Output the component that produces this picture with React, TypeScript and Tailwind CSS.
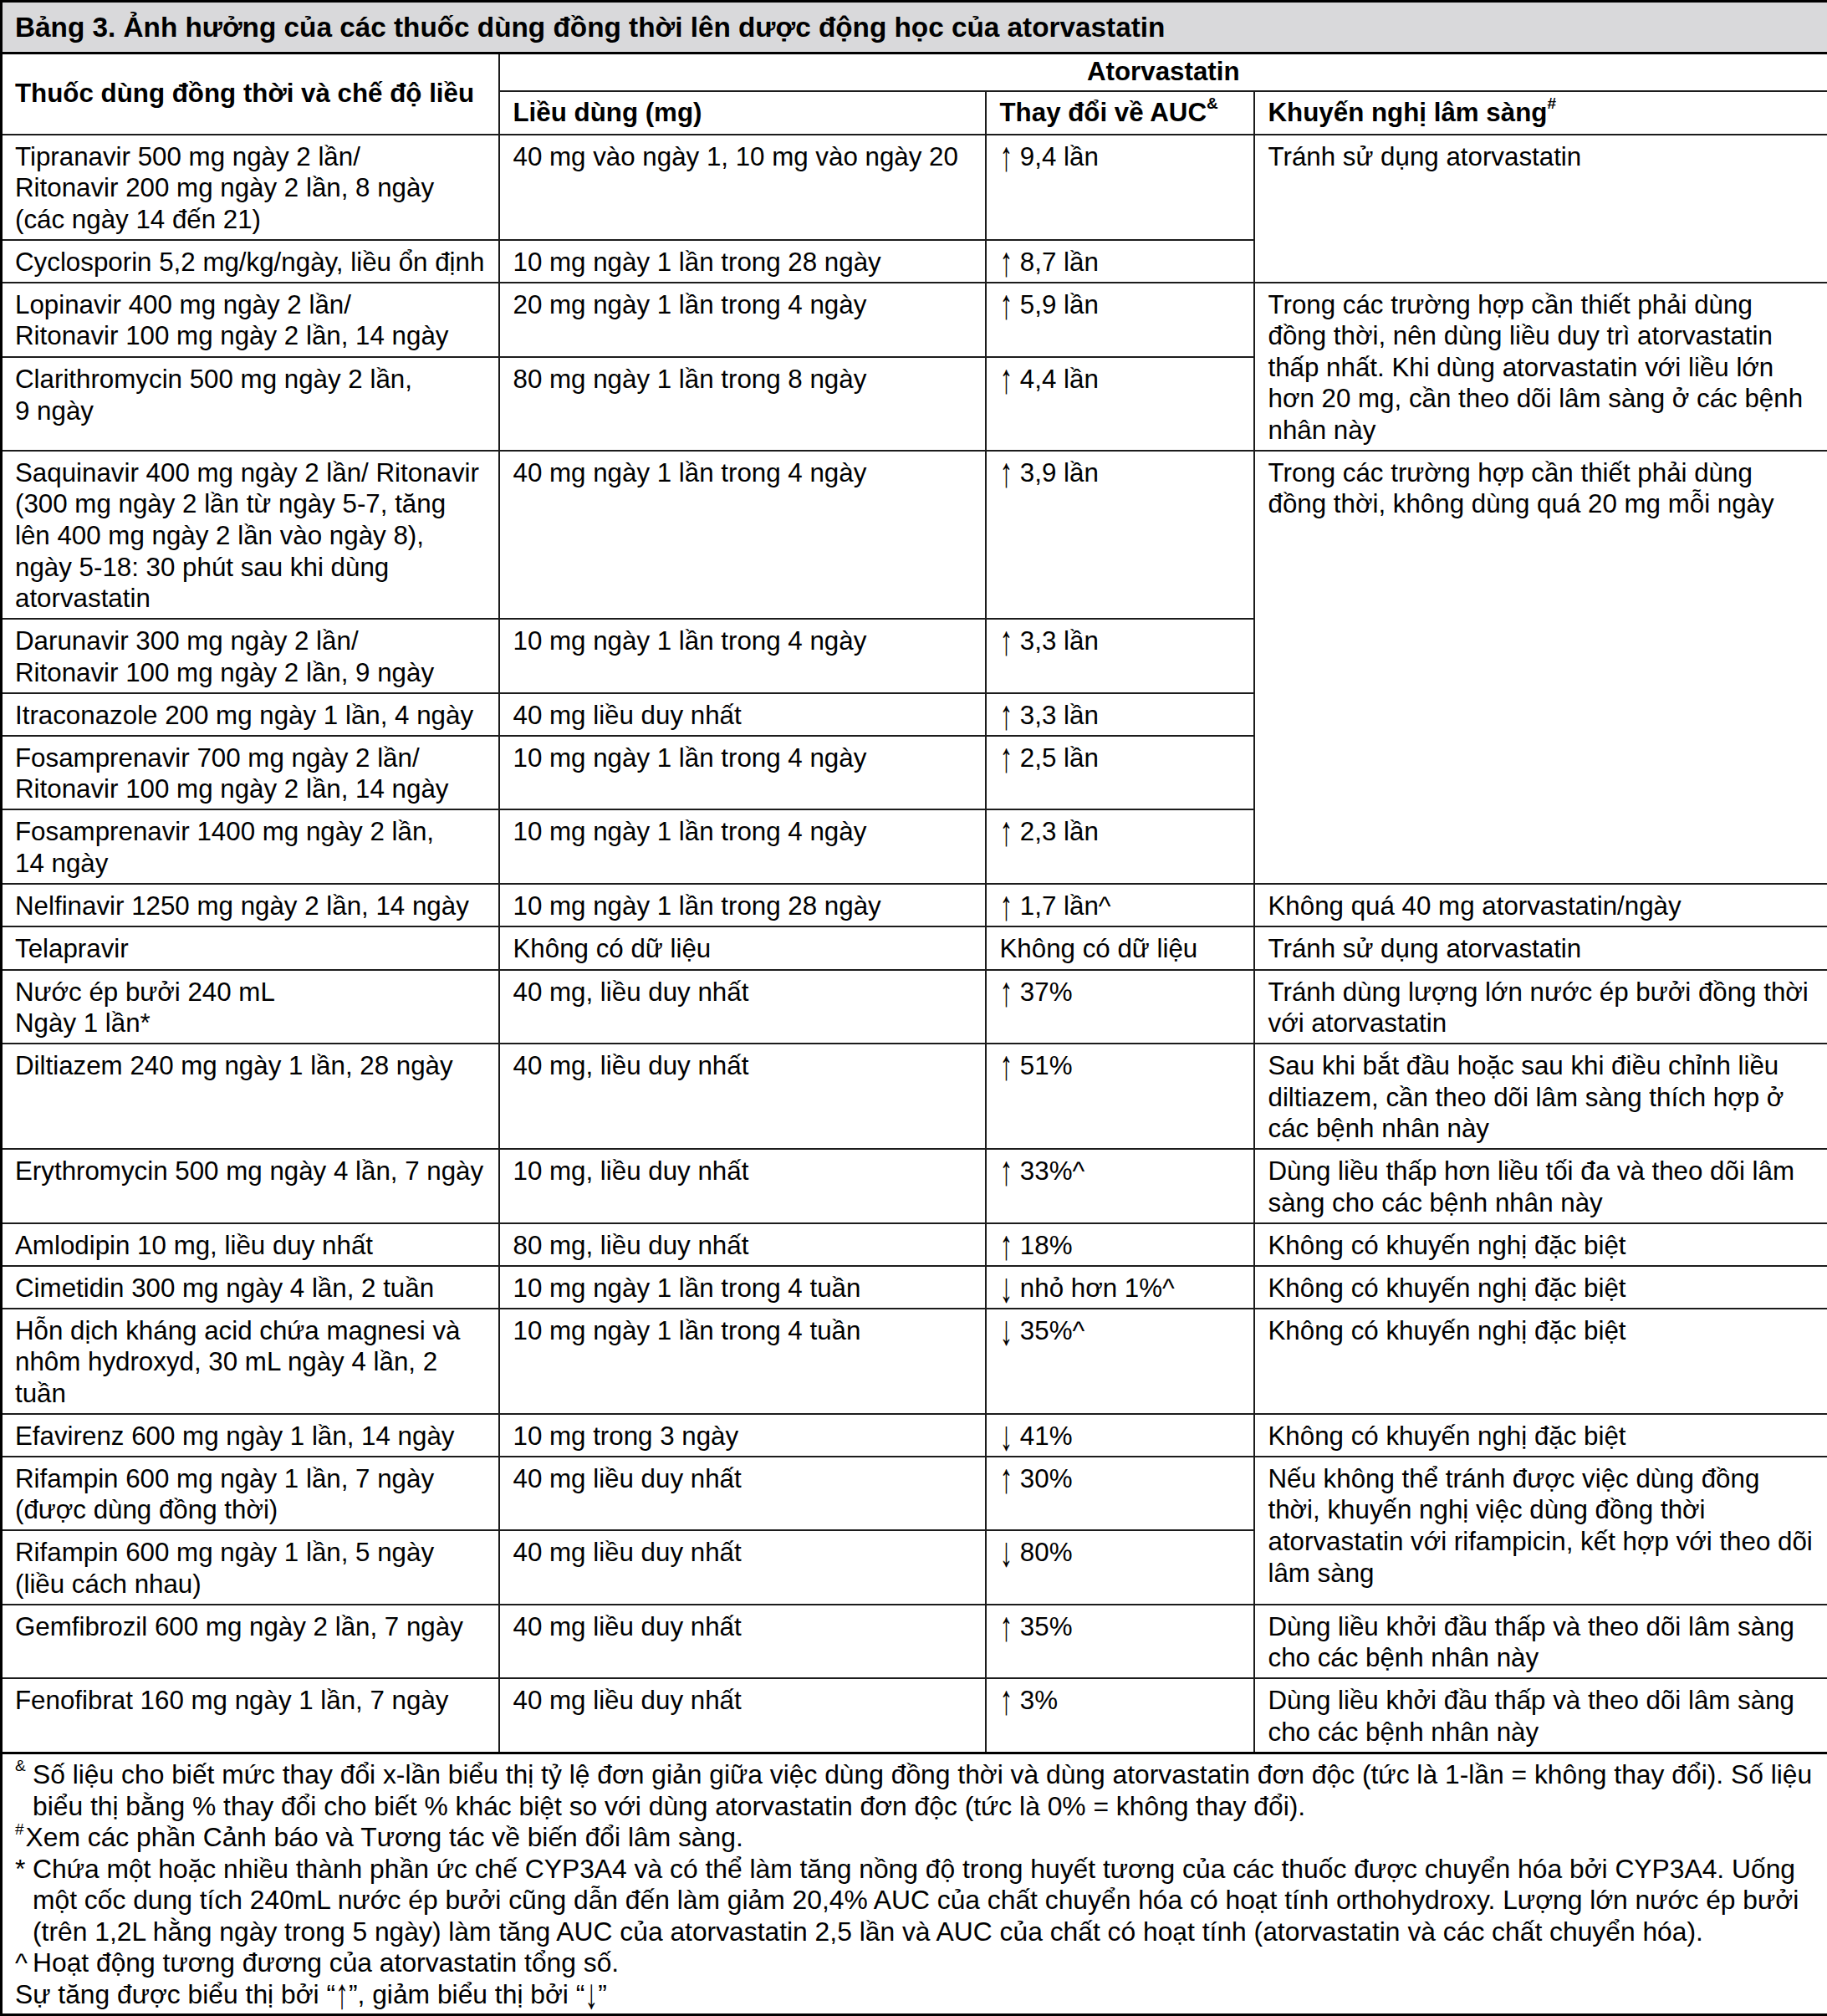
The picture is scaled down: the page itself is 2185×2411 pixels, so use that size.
import React from "react";

type Row = {
  a: string;
  b: string;
  c: string;
  d?: string;
  dSpan?: number;
  h?: string;
};

const rows: Row[] = [
  { a: "Tipranavir 500 mg ngày 2 lần/\nRitonavir 200 mg ngày 2 lần, 8 ngày\n(các ngày 14 đến 21)", b: "40 mg vào ngày 1, 10 mg vào ngày 20", c: "↑ 9,4 lần", d: "Tránh sử dụng atorvastatin", dSpan: 2 },
  { a: "Cyclosporin 5,2 mg/kg/ngày, liều ổn định", b: "10 mg ngày 1 lần trong 28 ngày", c: "↑ 8,7 lần" },
  { a: "Lopinavir 400 mg ngày 2 lần/\nRitonavir 100 mg ngày 2 lần, 14 ngày", b: "20 mg ngày 1 lần trong 4 ngày", c: "↑ 5,9 lần", d: "Trong các trường hợp cần thiết phải dùng\nđồng thời, nên dùng liều duy trì atorvastatin\nthấp nhất. Khi dùng atorvastatin với liều lớn\nhơn 20 mg, cần theo dõi lâm sàng ở các bệnh\nnhân này", dSpan: 2, h: "h-[89px]" },
  { a: "Clarithromycin 500 mg ngày 2 lần,\n9 ngày", b: "80 mg ngày 1 lần trong 8 ngày", c: "↑ 4,4 lần", h: "h-[111px]" },
  { a: "Saquinavir 400 mg ngày 2 lần/ Ritonavir\n(300 mg ngày 2 lần từ ngày 5-7, tăng\nlên 400 mg ngày 2 lần vào ngày 8),\nngày 5-18: 30 phút sau khi dùng\natorvastatin", b: "40 mg ngày 1 lần trong 4 ngày", c: "↑ 3,9 lần", d: "Trong các trường hợp cần thiết phải dùng\nđồng thời, không dùng quá 20 mg mỗi ngày", dSpan: 5 },
  { a: "Darunavir 300 mg ngày 2 lần/\nRitonavir 100 mg ngày 2 lần, 9 ngày", b: "10 mg ngày 1 lần trong 4 ngày", c: "↑ 3,3 lần" },
  { a: "Itraconazole 200 mg ngày 1 lần, 4 ngày", b: "40 mg liều duy nhất", c: "↑ 3,3 lần" },
  { a: "Fosamprenavir 700 mg ngày 2 lần/\nRitonavir 100 mg ngày 2 lần, 14 ngày", b: "10 mg ngày 1 lần trong 4 ngày", c: "↑ 2,5 lần" },
  { a: "Fosamprenavir 1400 mg ngày 2 lần,\n14 ngày", b: "10 mg ngày 1 lần trong 4 ngày", c: "↑ 2,3 lần" },
  { a: "Nelfinavir 1250 mg ngày 2 lần, 14 ngày", b: "10 mg ngày 1 lần trong 28 ngày", c: "↑ 1,7 lần^", d: "Không quá 40 mg atorvastatin/ngày" },
  { a: "Telapravir", b: "Không có dữ liệu", c: "Không có dữ liệu", d: "Tránh sử dụng atorvastatin", h: "h-[52px]" },
  { a: "Nước ép bưởi 240 mL\nNgày 1 lần*", b: "40 mg, liều duy nhất", c: "↑ 37%", d: "Tránh dùng lượng lớn nước ép bưởi đồng thời\nvới atorvastatin" },
  { a: "Diltiazem 240 mg ngày 1 lần, 28 ngày", b: "40 mg, liều duy nhất", c: "↑ 51%", d: "Sau khi bắt đầu hoặc sau khi điều chỉnh liều\ndiltiazem, cần theo dõi lâm sàng thích hợp ở\ncác bệnh nhân này" },
  { a: "Erythromycin 500 mg ngày 4 lần, 7 ngày", b: "10 mg, liều duy nhất", c: "↑ 33%^", d: "Dùng liều thấp hơn liều tối đa và theo dõi lâm\nsàng cho các bệnh nhân này" },
  { a: "Amlodipin 10 mg, liều duy nhất", b: "80 mg, liều duy nhất", c: "↑ 18%", d: "Không có khuyến nghị đặc biệt" },
  { a: "Cimetidin 300 mg ngày 4 lần, 2 tuần", b: "10 mg ngày 1 lần trong 4 tuần", c: "↓ nhỏ hơn 1%^", d: "Không có khuyến nghị đặc biệt" },
  { a: "Hỗn dịch kháng acid chứa magnesi và\nnhôm hydroxyd, 30 mL ngày 4 lần, 2\ntuần", b: "10 mg ngày 1 lần trong 4 tuần", c: "↓ 35%^", d: "Không có khuyến nghị đặc biệt" },
  { a: "Efavirenz 600 mg ngày 1 lần, 14 ngày", b: "10 mg trong 3 ngày", c: "↓ 41%", d: "Không có khuyến nghị đặc biệt" },
  { a: "Rifampin 600 mg ngày 1 lần, 7 ngày\n(được dùng đồng thời)", b: "40 mg liều duy nhất", c: "↑ 30%", d: "Nếu không thể tránh được việc dùng đồng\nthời, khuyến nghị việc dùng đồng thời\natorvastatin với rifampicin, kết hợp với theo dõi\nlâm sàng", dSpan: 2 },
  { a: "Rifampin 600 mg ngày 1 lần, 5 ngày\n(liều cách nhau)", b: "40 mg liều duy nhất", c: "↓ 80%" },
  { a: "Gemfibrozil 600 mg ngày 2 lần, 7 ngày", b: "40 mg liều duy nhất", c: "↑ 35%", d: "Dùng liều khởi đầu thấp và theo dõi lâm sàng\ncho các bệnh nhân này" },
  { a: "Fenofibrat 160 mg ngày 1 lần, 7 ngày", b: "40 mg liều duy nhất", c: "↑ 3%", d: "Dùng liều khởi đầu thấp và theo dõi lâm sàng\ncho các bệnh nhân này" },
];

function Arrow({ ch }: { ch: string }) {
  return <span className="inline-block scale-y-[1.6]">{ch}</span>;
}

function Change({ text }: { text: string }) {
  const ch = text.charAt(0);
  if (ch === "↑" || ch === "↓") {
    return (
      <>
        <Arrow ch={ch} />
        {text.slice(1)}
      </>
    );
  }
  return <>{text}</>;
}

const cell =
  "border-2 border-[#1c1c1c] align-top whitespace-pre-line pt-[7px] pb-[4.35px] px-[16px] leading-[37.6px]";

const supCls = "text-[19px] leading-none align-[5px]";

export default function App() {
  return (
    <div
      className="w-[2185px] bg-white text-black text-[31.3px]"
      style={{ fontFamily: '"Liberation Sans", Arial, sans-serif' }}
    >
      <table className="w-[2185px] table-fixed border-collapse border-[3px] border-black">
        <colgroup>
          <col className="w-[595px]" />
          <col className="w-[582px]" />
          <col className="w-[321px]" />
          <col className="w-[687px]" />
        </colgroup>
        <tbody>
          <tr className="h-[62px]">
            <td
              colSpan={4}
              className="border-[3px] border-black bg-[#d9d9db] px-[15px] align-middle font-bold text-[33.3px] leading-[37.6px]"
            >
              Bảng 3. Ảnh hưởng của các thuốc dùng đồng thời lên dược động học của atorvastatin
            </td>
          </tr>
          <tr className="h-[45px]">
            <td
              rowSpan={2}
              className="border-2 border-[#1c1c1c] px-[15px] align-middle font-bold leading-[37.6px]"
            >
              Thuốc dùng đồng thời và chế độ liều
            </td>
            <td
              colSpan={3}
              className="border-2 border-[#1c1c1c] text-center align-middle font-bold leading-[37.6px]"
            >
              Atorvastatin
            </td>
          </tr>
          <tr className="h-[52px]">
            <td className="border-2 border-[#1c1c1c] px-[16px] align-middle font-bold leading-[37.6px]">
              Liều dùng (mg)
            </td>
            <td className="border-2 border-[#1c1c1c] px-[16px] align-middle font-bold leading-[37.6px]">
              Thay đổi về AUC<sup className={supCls}>&amp;</sup>
            </td>
            <td className="border-2 border-[#1c1c1c] px-[16px] align-middle font-bold leading-[37.6px]">
              Khuyến nghị lâm sàng<sup className={supCls}>#</sup>
            </td>
          </tr>
          {rows.map((r, i) => (
            <tr key={i} className={r.h ?? ""}>
              <td className={cell + " pl-[15px]"}>{r.a}</td>
              <td className={cell}>{r.b}</td>
              <td className={cell}>
                <Change text={r.c} />
              </td>
              {r.d !== undefined && (
                <td className={cell} rowSpan={r.dSpan ?? 1}>
                  {r.d}
                </td>
              )}
            </tr>
          ))}
          <tr>
            <td
              colSpan={4}
              className="border-[3px] border-black pt-[6px] pb-[3px] px-[15px] align-top whitespace-nowrap text-[31.8px] leading-[37.6px]"
            >
              <div className="flex">
                <span className="w-[21px] shrink-0">
                  <sup className={supCls}>&amp;</sup>
                </span>
                <span>
                  Số liệu cho biết mức thay đổi x-lần biểu thị tỷ lệ đơn giản giữa việc dùng đồng thời và dùng atorvastatin đơn độc (tức là 1-lần = không thay đổi). Số liệu
                  <br />
                  biểu thị bằng % thay đổi cho biết % khác biệt so với dùng atorvastatin đơn độc (tức là 0% = không thay đổi).
                </span>
              </div>
              <div>
                <sup className={supCls}>#</sup>
                <span className="ml-[2px]">Xem các phần Cảnh báo và Tương tác về biến đổi lâm sàng.</span>
              </div>
              <div className="flex">
                <span className="w-[21px] shrink-0">*</span>
                <span>
                  Chứa một hoặc nhiều thành phần ức chế CYP3A4 và có thể làm tăng nồng độ trong huyết tương của các thuốc được chuyển hóa bởi CYP3A4. Uống
                  <br />
                  một cốc dung tích 240mL nước ép bưởi cũng dẫn đến làm giảm 20,4% AUC của chất chuyển hóa có hoạt tính orthohydroxy. Lượng lớn nước ép bưởi
                  <br />
                  (trên 1,2L hằng ngày trong 5 ngày) làm tăng AUC của atorvastatin 2,5 lần và AUC của chất có hoạt tính (atorvastatin và các chất chuyển hóa).
                </span>
              </div>
              <div className="flex">
                <span className="w-[21px] shrink-0">^</span>
                <span>Hoạt động tương đương của atorvastatin tổng số.</span>
              </div>
              <div>
                Sự tăng được biểu thị bởi “<Arrow ch="↑" />”, giảm biểu thị bởi “<Arrow ch="↓" />”
              </div>
            </td>
          </tr>
        </tbody>
      </table>
    </div>
  );
}
